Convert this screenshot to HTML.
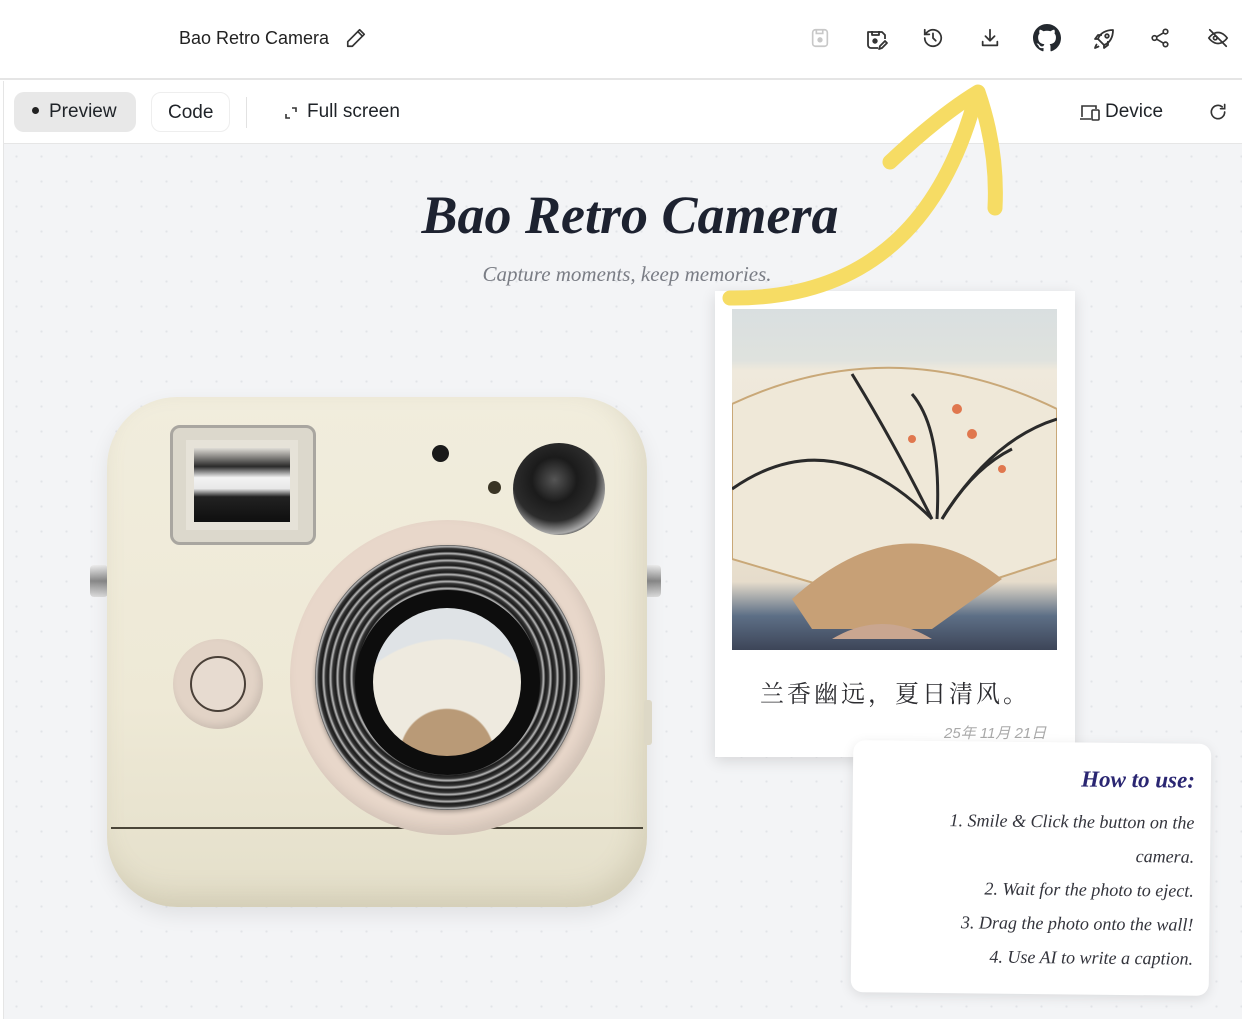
<!DOCTYPE html>
<html><head><meta charset="utf-8"><style>
*{margin:0;padding:0;box-sizing:border-box}
body{width:1242px;height:1019px;overflow:hidden;background:#fff;font-family:"Liberation Sans",sans-serif;position:relative;color:#1f2328}
.hdr{position:absolute;left:0;top:0;width:1242px;height:80px;border-bottom:2px solid #e5e5e5;background:#fff}
.tb{position:absolute;left:3px;top:81px;width:1239px;height:63px;border-bottom:1px solid #e6e6e6;border-left:1px solid #e5e5e5;background:#fff}
.main{position:absolute;left:3px;top:144px;width:1239px;height:875px;background-color:#f3f4f6;background-image:radial-gradient(#e2e4e8 1px,transparent 1.3px);background-size:25px 25px;border-left:1px solid #e5e5e5}
.ic{position:absolute;top:27px}
.btn{position:absolute;top:11px;height:40px;border-radius:10px;font-size:19px;line-height:40px;padding:0 16px}
</style></head><body>
<div class="hdr">
<div style="position:absolute;left:179px;top:28px;font-size:18px;color:#222">Bao Retro Camera</div>
<svg class="ic" style="left:345px" width="22" height="22" viewBox="0 0 24 24" fill="none" stroke="#333" stroke-width="1.8" stroke-linecap="round" stroke-linejoin="round"><path d="M16 3l5 5L8 21H3v-5z"/><path d="M14 5l5 5"/></svg>
<svg class="ic" style="left:809px" width="22" height="22" viewBox="0 0 24 24" fill="none" stroke="#c8c8c8" stroke-width="1.8"><rect x="4" y="3" width="16" height="18" rx="3"/><path d="M8 3v4h7V3"/><circle cx="12" cy="14" r="2" fill="#c8c8c8"/></svg>
<svg class="ic" style="left:865px" width="24" height="24" viewBox="0 0 24 24" fill="none" stroke="#333" stroke-width="1.8" stroke-linejoin="round"><path d="M13 21H6a3 3 0 0 1-3-3V5h14l3 3v4"/><path d="M7 4v4h7V4"/><circle cx="10" cy="14" r="1.8" fill="#333"/><path d="M14 22l1-3 5-5 2 2-5 5z"/></svg>
<svg class="ic" style="left:922px" width="22" height="22" viewBox="0 0 24 24" fill="none" stroke="#333" stroke-width="1.9" stroke-linecap="round"><path d="M3 12a9 9 0 1 0 3-6.7L3 8"/><path d="M3 3v5h5"/><path d="M12 7v5l3 3"/></svg>
<svg class="ic" style="left:979px" width="22" height="22" viewBox="0 0 24 24" fill="none" stroke="#333" stroke-width="1.9" stroke-linecap="round" stroke-linejoin="round"><path d="M4 16v4h16v-4"/><path d="M12 3v12M7 10l5 5 5-5"/></svg>
<svg style="position:absolute;left:1033px;top:24px" width="28" height="28" viewBox="0 0 16 16"><path fill="#24292f" d="M8 0C3.58 0 0 3.58 0 8c0 3.54 2.290 6.53 5.47 7.59.4.07.55-.17.55-.38 0-.19-.01-.82-.01-1.49-2.01.37-2.53-.49-2.69-.94-.09-.23-.48-.94-.82-1.130-.28-.15-.68-.52-.01-.53.63-.01 1.08.58 1.23.82.72 1.21 1.87.87 2.33.66.07-.52.28-.87.51-1.07-1.78-.2-3.64-.89-3.64-3.95 0-.87.31-1.59.82-2.15-.08-.2-.36-1.02.08-2.12 0 0 .67-.21 2.2.82.64-.18 1.32-.27 2-.27.68 0 1.36.09 2 .27 1.53-1.04 2.2-.82 2.2-.82.44 1.1.16 1.92.08 2.12.51.56.82 1.27.82 2.15 0 3.07-1.87 3.75-3.65 3.95.29.25.54.73.54 1.48 0 1.07-.01 1.93-.01 2.2 0 .21.15.46.55.38A8.013 8.013 0 0016 8c0-4.42-3.58-8-8-8z"/></svg>
<svg class="ic" style="left:1092px" width="24" height="24" viewBox="0 0 24 24" fill="none" stroke="#333" stroke-width="1.8" stroke-linejoin="round"><path d="M9 15l-3-3c2-6 8-9 15-9 0 7-3 13-9 15z"/><circle cx="15" cy="9" r="1.8"/><path d="M6 12H3l3-4h4M12 18v3l4-3v-4M5 17c-1 1-2 4-2 4s3-1 4-2"/></svg>
<svg class="ic" style="left:1149px" width="22" height="22" viewBox="0 0 24 24" fill="none" stroke="#333" stroke-width="1.8"><circle cx="18" cy="5" r="2.5"/><circle cx="6" cy="12" r="2.5"/><circle cx="18" cy="19" r="2.5"/><path d="M8.2 10.8l7.6-4.5M8.2 13.2l7.6 4.5"/></svg>
<svg class="ic" style="left:1206px" width="24" height="22" viewBox="0 0 24 24" fill="none" stroke="#333" stroke-width="1.8" stroke-linecap="round"><path d="M2 12s4-6 10-6 10 6 10 6-4 6-10 6S2 12 2 12z"/><circle cx="9" cy="12" r="2"/><path d="M3 3l18 18"/></svg>
</div>
<div class="tb">
<div class="btn" style="left:10px;background:#e8e8e8;width:122px"><span style="display:inline-block;width:7px;height:7px;border-radius:50%;background:#222;vertical-align:middle;margin:0 10px 3px 2px"></span>Preview</div>
<div class="btn" style="left:147px;border:1.5px solid #eee;width:79px">Code</div>
<div style="position:absolute;left:242px;top:16px;width:1px;height:31px;background:#e2e2e2"></div>
<svg style="position:absolute;left:280px;top:25px" width="14" height="14" viewBox="0 0 14 14" fill="none" stroke="#333" stroke-width="1.6"><path d="M2 8v4h4M8 2h4v4"/></svg>
<div style="position:absolute;left:303px;top:20px;font-size:19px">Full screen</div>
<svg style="position:absolute;left:1075px;top:23px" width="22" height="18" viewBox="0 0 22 18" fill="none" stroke="#333" stroke-width="1.6"><path d="M3 13V2h14v3M1 15h11"/><rect x="13" y="6" width="7" height="10" rx="1"/></svg>
<div style="position:absolute;left:1101px;top:20px;font-size:19px">Device</div>
<svg style="position:absolute;left:1204px;top:21px" width="20" height="20" viewBox="0 0 24 24" fill="none" stroke="#333" stroke-width="2" stroke-linecap="round"><path d="M20 12a8 8 0 1 1-3-6.2"/><path d="M20 3v5h-5"/></svg>
</div>
<div class="main"></div>

<div style="position:absolute;left:0;top:184px;width:1260px;text-align:center;font-family:'Liberation Serif',serif;font-style:italic;font-weight:bold;font-size:54px;color:#1d2230">Bao Retro Camera</div>
<div style="position:absolute;left:0;top:262px;width:1254px;text-align:center;font-family:'Liberation Serif',serif;font-style:italic;font-size:21px;color:#7a7d85">Capture moments, keep memories.</div>

<!-- camera -->
<div style="position:absolute;left:90px;top:565px;width:18px;height:32px;background:linear-gradient(#eee,#888,#ddd);border-radius:4px"></div>
<div style="position:absolute;left:643px;top:565px;width:18px;height:32px;background:linear-gradient(#eee,#888,#ddd);border-radius:4px"></div>
<div style="position:absolute;left:107px;top:397px;width:540px;height:510px;border-radius:70px;background:linear-gradient(180deg,#f1eddd 0%,#eee9d6 60%,#e4dfca 100%);box-shadow:inset -8px -12px 25px rgba(150,140,110,.22),0 8px 20px rgba(0,0,0,.08)"></div>
<div style="position:absolute;left:111px;top:827px;width:532px;height:2px;background:#4a4538"></div>
<div style="position:absolute;left:644px;top:700px;width:8px;height:45px;background:#ddd8c6;border-radius:3px"></div>
<div style="position:absolute;left:170px;top:425px;width:146px;height:120px;border-radius:10px;background:#dcd8cc;border:3px solid #a9a6a0"></div>
<div style="position:absolute;left:186px;top:440px;width:112px;height:90px;background:linear-gradient(#dfdcd6 0%,#2a2a2a 25%,#f3f3f3 40%,#e8e8e8 55%,#222 66%,#111 95%);border:8px solid #e6e2d8"></div>
<div style="position:absolute;left:432px;top:445px;width:17px;height:17px;border-radius:50%;background:#1a1a1a"></div>
<div style="position:absolute;left:488px;top:481px;width:13px;height:13px;border-radius:50%;background:#3a3525"></div>
<div style="position:absolute;left:513px;top:443px;width:92px;height:92px;border-radius:50%;background:radial-gradient(circle at 45% 40%,#555 0,#1b1b1b 30%,#2c2c2c 55%,#aaa 72%,#222 78%,#eee 90%,#888 100%)"></div>
<div style="position:absolute;left:173px;top:639px;width:90px;height:90px;border-radius:50%;background:#e2d3c6;box-shadow:inset -3px -4px 8px rgba(0,0,0,.1)"></div>
<div style="position:absolute;left:190px;top:656px;width:56px;height:56px;border-radius:50%;background:#e7dbd0;border:2px solid #4a4038"></div>
<div style="position:absolute;left:290px;top:520px;width:315px;height:315px;border-radius:50%;background:#e8d7ca;box-shadow:inset -6px -8px 14px rgba(0,0,0,.1);z-index:2"></div>
<div style="position:absolute;left:315px;top:545px;width:265px;height:265px;border-radius:50%;background:repeating-radial-gradient(circle,#1a1a1a 0,#333 3px,#bbb 5px,#222 7px);box-shadow:0 2px 4px rgba(0,0,0,.3);z-index:2"></div>
<div style="position:absolute;left:355px;top:590px;width:185px;height:185px;border-radius:50%;background:#0d0d0d;z-index:2"></div>
<div style="position:absolute;left:373px;top:608px;width:148px;height:148px;border-radius:50%;background:radial-gradient(circle at 50% 100%,#b99a77 0 28%,#eeeadf 29% 70%,#dfe3e6 71%);z-index:2"></div>

<!-- polaroid -->
<div style="position:absolute;left:715px;top:291px;width:360px;height:466px;background:#fff;box-shadow:0 4px 14px rgba(0,0,0,.12)"></div>
<div style="position:absolute;left:732px;top:309px;width:325px;height:341px;background:linear-gradient(180deg,#d9dfe0 0%,#dfe2de 15%,#efe9dc 18%,#ece4d2 60%,#e6dccb 80%,#5d6f86 90%,#3d4558 100%);overflow:hidden">
<svg width="325" height="341" viewBox="0 0 325 341"><path d="M0 95 Q160 20 325 100 L325 250 L170 300 L0 250Z" fill="#efe8d8" stroke="#c9a878" stroke-width="2"/><path d="M60 290 Q170 190 270 270 L200 320 L80 320Z" fill="#c7a076"/><g stroke="#2a2a2a" stroke-width="3" fill="none"><path d="M200 210 Q160 130 120 65"/><path d="M205 210 Q210 120 180 85"/><path d="M210 210 Q260 130 325 110"/><path d="M200 210 Q100 110 0 180"/><path d="M210 210 Q240 160 280 140"/></g><g fill="#e0774e"><circle cx="225" cy="100" r="5"/><circle cx="240" cy="125" r="5"/><circle cx="180" cy="130" r="4"/><circle cx="270" cy="160" r="4"/></g><path d="M100 330 Q150 300 200 330Z" fill="#c9a690"/></svg>
</div>
<div style="position:absolute;left:715px;top:674px;width:360px;text-align:center;font-family:'Noto Serif CJK SC',serif;font-size:24px;color:#2c2c30;letter-spacing:3px">兰香幽远，夏日清风。</div>
<div style="position:absolute;left:944px;top:722px;font-family:'Liberation Sans','Noto Sans CJK SC',sans-serif;font-style:italic;font-size:15px;color:#a9a9a9">25年 11月 21日</div>

<!-- note -->
<div style="position:absolute;left:852px;top:742px;width:358px;height:252px;background:#fff;border-radius:12px;box-shadow:0 3px 12px rgba(0,0,0,.1);transform:rotate(0.6deg);text-align:right;padding:20px 16px 0 0;font-family:'Liberation Serif',serif;font-style:italic;color:#33343c;font-size:18px;line-height:34px">
<div style="font-weight:bold;font-size:23px;color:#2a2672;margin-bottom:8px">How to use:</div>
<div>1. Smile &amp; Click the button on the</div><div>camera.</div><div>2. Wait for the photo to eject.</div><div>3. Drag the photo onto the wall!</div><div>4. Use AI to write a caption.</div>
</div>

<!-- arrow -->
<svg style="position:absolute;left:0;top:0" width="1242" height="1019" viewBox="0 0 1242 1019"><g fill="none" stroke="#f6dc64" stroke-width="15" stroke-linecap="round" stroke-linejoin="round"><path d="M730 298 Q920 300 975 100"/><path d="M890 162 Q940 115 978 92 Q998 150 995 208"/></g></svg>
</body></html>
